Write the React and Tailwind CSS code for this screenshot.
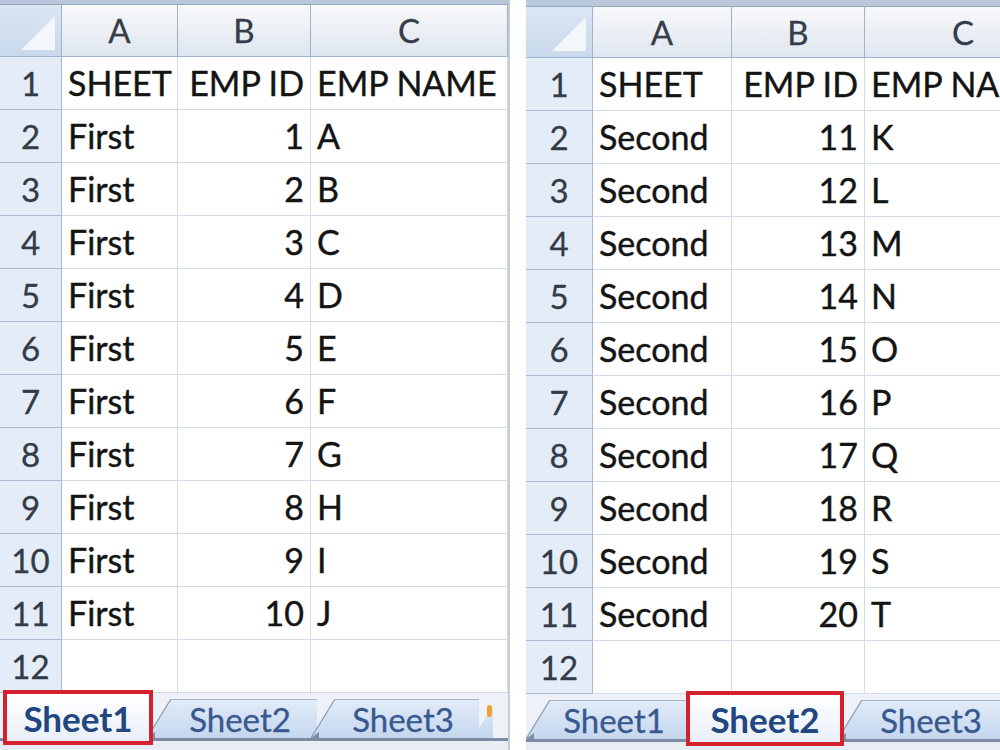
import React from "react";

const leftRows = [
  ["SHEET", "EMP ID", "EMP NAME"],
  ["First", "1", "A"],
  ["First", "2", "B"],
  ["First", "3", "C"],
  ["First", "4", "D"],
  ["First", "5", "E"],
  ["First", "6", "F"],
  ["First", "7", "G"],
  ["First", "8", "H"],
  ["First", "9", "I"],
  ["First", "10", "J"],
  ["", "", ""],
];

const rightRows = [
  ["SHEET", "EMP ID", "EMP NAME"],
  ["Second", "11", "K"],
  ["Second", "12", "L"],
  ["Second", "13", "M"],
  ["Second", "14", "N"],
  ["Second", "15", "O"],
  ["Second", "16", "P"],
  ["Second", "17", "Q"],
  ["Second", "18", "R"],
  ["Second", "19", "S"],
  ["Second", "20", "T"],
  ["", "", ""],
];

function Corner() {
  return (
    <div className="relative h-full border-r border-b border-[#9fb3cc] bg-gradient-to-b from-[#dbe6f4] to-[#c9d8ec]">
      <svg className="absolute right-[6px] bottom-[6px]" width="34" height="34" viewBox="0 0 34 34">
        <polygon points="34,0 34,34 0,34" fill="#f3f6fb" />
      </svg>
    </div>
  );
}

function ColHead({ children }) {
  return (
    <div className="h-full flex items-center justify-center border-r border-b border-[#9fb3cc] bg-gradient-to-b from-[#f8f9fb] to-[#dfe6ef] text-[#353d4a] text-[33px] leading-none [-webkit-text-stroke:0.3px_#353d4a]">
      {children}
    </div>
  );
}

function RowHead({ children }) {
  return (
    <div className="h-full flex items-center justify-center border-r border-b border-[#a9bbd2] bg-[#e4ecf7] text-[#333b48] text-[33px] leading-none [-webkit-text-stroke:0.3px_#333b48]">
      {children}
    </div>
  );
}

function Cell({ children, right }) {
  return (
    <div
      className={
        "h-full flex items-center border-r border-b border-[#d3dbe6] bg-white text-[#141414] text-[34px] leading-none whitespace-nowrap overflow-hidden [-webkit-text-stroke:0.4px_#141414] " +
        (right ? "justify-end pr-[6px]" : "pl-[6px]")
      }
    >
      {children}
    </div>
  );
}

function InactiveTab({ label, width, first }) {
  return (
    <div
      className={
        "relative h-full shrink-0 flex items-center justify-center " + (first ? "" : "-ml-[6px]")
      }
      style={{ width }}
    >
      <div className="absolute inset-0 bg-gradient-to-b from-[#e3ecf8] to-[#c4d6ee] [clip-path:polygon(24px_0,100%_0,100%_100%,0_100%)]" />
      <svg className="absolute left-0 top-0" width="26" height="39" viewBox="0 0 26 39">
        <line x1="0" y1="39" x2="24" y2="0" stroke="#8a9bb3" strokeWidth="1.2" />
        <polygon points="0,39 8,39 8,33" fill="#7f8ea6" />
      </svg>
      <div className="absolute left-[24px] right-0 top-0 h-px bg-[#a4b4c9]" />
      <span className="relative pl-[16px] pt-[2px] text-[33px] leading-none text-[#37598f] [-webkit-text-stroke:0.3px_#37598f]">
        {label}
      </span>
    </div>
  );
}

function ActiveTab({ label, width }) {
  return (
    <div
      className="relative shrink-0 h-[55px] -mt-[9px] flex items-center justify-center border-[4px] border-[#d5212e] bg-gradient-to-b from-[#ffffff] to-[#e9eff8] z-10"
      style={{ width }}
    >
      <span className="text-[35px] leading-none font-bold text-[#22467f] pt-[2px]">{label}</span>
    </div>
  );
}

function Sheet({ rows, cols, topStrip, headH, tabs }) {
  const template = cols.map((c) => c + "px").join(" ");
  return (
    <div className="flex flex-col h-full overflow-hidden">
      <div className="shrink-0 bg-[#b8c7da] border-b border-[#94a8c2]" style={{ height: topStrip }} />
      <div
        className="grid shrink-0"
        style={{ gridTemplateColumns: template, gridTemplateRows: headH + "px", gridAutoRows: "53px" }}
      >
        <Corner />
        <ColHead>A</ColHead>
        <ColHead>B</ColHead>
        <ColHead>C</ColHead>
        {rows.map((r, i) => (
          <React.Fragment key={i}>
            <RowHead>{i + 1}</RowHead>
            <Cell>{r[0]}</Cell>
            <Cell right>{r[1]}</Cell>
            <Cell>{r[2]}</Cell>
          </React.Fragment>
        ))}
      </div>
      <div className="flex-1 flex flex-col bg-[#eef2f8]">
        <div className="h-[6px] shrink-0" />
        <div className="flex h-[39px] shrink-0 items-start">{tabs}</div>
        <div className="h-[3px] shrink-0 bg-[#7d8ca3]" />
        <div className="flex-1 bg-[#e8edf3]" />
      </div>
    </div>
  );
}

export default function App() {
  return (
    <div className="w-[1000px] h-[750px] bg-white flex overflow-hidden font-['Lato',sans-serif]">
      <div className="w-[510px] shrink-0 h-full border-r-2 border-[#c3ccd8]">
        <Sheet
          rows={leftRows}
          cols={[62, 116, 133, 197]}
          topStrip={5}
          headH={52}
          tabs={
            <>
              <div className="w-[3px] shrink-0" />
              <ActiveTab label="Sheet1" width={150} />
              <InactiveTab label="Sheet2" width={170} />
              <InactiveTab label="Sheet3" width={168} />
              <div className="relative h-full w-[20px] shrink-0 -ml-[6px]">
                <div className="absolute inset-0 bg-gradient-to-b from-[#e3ecf8] to-[#c4d6ee] [clip-path:polygon(24px_0,100%_0,100%_100%,0_100%)]" />
                <div className="absolute left-[14px] top-[6px] w-[5px] h-[12px] bg-[#f0a030] rounded-sm" />
              </div>
            </>
          }
        />
      </div>
      <div className="w-[16px] shrink-0 h-full bg-white" />
      <div className="flex-1 min-w-0 h-full">
        <Sheet
          rows={rightRows}
          cols={[67, 139, 133, 197]}
          topStrip={7}
          headH={51}
          tabs={
            <>
              <InactiveTab label="Sheet1" width={160} first />
              <ActiveTab label="Sheet2" width={158} />
              <InactiveTab label="Sheet3" width={170} />
            </>
          }
        />
      </div>
    </div>
  );
}
